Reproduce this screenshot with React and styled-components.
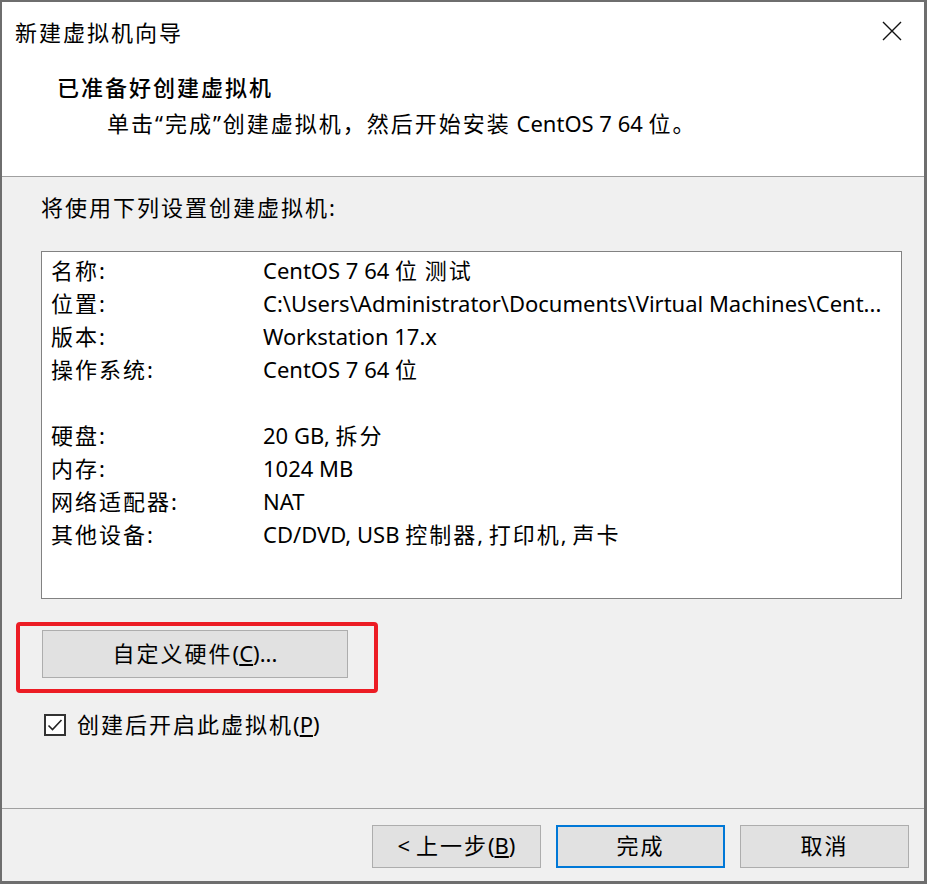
import React from 'react';
import styled, { createGlobalStyle } from 'styled-components';

const GlobalStyle = createGlobalStyle`
  html, body {
    margin: 0;
    padding: 0;
    background: #ffffff;
  }
  body {
    font-family: "Noto Sans", "Noto Sans CJK SC", sans-serif;
    color: #000;
  }
`;

// Chinese glyphs in the original UI font sit a little wider apart than Latin ones
const Han = styled.span`
  letter-spacing: 2px;
`;

const HAN_RUN = /([\u3000-\u303f\u4e00-\u9fff\uff00-\uffef“”]+)/;

function T({ children }) {
  return String(children)
    .split(HAN_RUN)
    .map((part, i) => (HAN_RUN.test(part) ? <Han key={i}>{part}</Han> : part));
}

const Window = styled.div`
  width: 927px;
  height: 884px;
  box-sizing: border-box;
  border: 2px solid #6e6e6e;
  border-right-width: 3px;
  border-bottom-width: 3px;
  display: flex;
  flex-direction: column;
  background: #f0f0f0;
  font-size: 22px;
`;

const Header = styled.div`
  height: 174px;
  background: #ffffff;
  border-bottom: 1px solid #a0a0a0;
  display: flex;
  flex-direction: column;
`;

const TitleBar = styled.div`
  height: 58px;
  display: flex;
  align-items: center;
  justify-content: space-between;
  padding: 0 22px 0 13px;
`;

const Title = styled.div`
  font-size: 22px;
`;

const CloseIcon = styled.svg`
  width: 20px;
  height: 20px;
`;

const HeaderText = styled.div`
  padding: 7px 0 0 55px;
  display: flex;
  flex-direction: column;
`;

const Heading = styled.div`
  font-weight: 500;
  font-size: 22px;
  line-height: 40px;
`;

const Subtitle = styled.div`
  padding-left: 50px;
  line-height: 32px;
`;

const Body = styled.div`
  flex: 1;
  display: flex;
  flex-direction: column;
  padding: 12px 22px 0 39px;
`;

const Lead = styled.div`
  line-height: 36px;
`;

const ListBox = styled.div`
  margin-top: 26px;
  height: 348px;
  box-sizing: border-box;
  background: #ffffff;
  border: 1px solid #828282;
  padding: 2px 9px;
`;

const Row = styled.div`
  display: grid;
  grid-template-columns: 212px 1fr;
  height: 33px;
  line-height: 33px;
  white-space: nowrap;
`;

const Value = styled.span`
  overflow: hidden;
`;

const Highlight = styled.div`
  margin: 23px 0 0 -25px;
  width: 362px;
  height: 71px;
  box-sizing: border-box;
  border: 4px solid #ec1c24;
  border-radius: 4px;
  padding: 4px 0 0 22px;
`;

const Button = styled.button`
  font-family: inherit;
  font-size: 22px;
  color: #000;
  background: #e1e1e1;
  border: ${p => (p.$primary ? '2px solid #0078d7' : '1px solid #adadad')};
  width: ${p => p.$width || 169}px;
  height: ${p => p.$height || 43}px;
  padding: 0 0 5px;
  box-sizing: border-box;
`;

const CheckRow = styled.label`
  margin-top: 14px;
  display: flex;
  align-items: center;
  gap: 11px;
  padding-left: 3px;
`;

const CheckBox = styled.span`
  width: 22px;
  height: 22px;
  box-sizing: border-box;
  border: 2px solid #333;
  background: #fff;
  display: flex;
  align-items: center;
  justify-content: center;
`;

const CheckText = styled.span`
  padding-bottom: 3px;
`;

const Footer = styled.div`
  height: 73px;
  border-top: 1px solid #a0a0a0;
  display: flex;
  justify-content: flex-end;
  align-items: flex-start;
  gap: 15px;
  padding: 16px 15px 0 0;
  box-sizing: border-box;
`;

const rows = [
  ['名称:', 'CentOS 7 64 位 测试'],
  ['位置:', 'C:\\Users\\Administrator\\Documents\\Virtual Machines\\Cent...'],
  ['版本:', 'Workstation 17.x'],
  ['操作系统:', 'CentOS 7 64 位'],
  ['', ''],
  ['硬盘:', '20 GB, 拆分'],
  ['内存:', '1024 MB'],
  ['网络适配器:', 'NAT'],
  ['其他设备:', 'CD/DVD, USB 控制器, 打印机, 声卡'],
];

export default function App() {
  return (
    <>
      <GlobalStyle />
      <Window>
        <Header>
          <TitleBar>
            <Title><T>新建虚拟机向导</T></Title>
            <CloseIcon viewBox="0 0 20 20">
              <path d="M1 1 L19 19 M19 1 L1 19" stroke="#111" strokeWidth="1.4" fill="none" />
            </CloseIcon>
          </TitleBar>
          <HeaderText>
            <Heading><T>已准备好创建虚拟机</T></Heading>
            <Subtitle><T>单击“完成”创建虚拟机，然后开始安装 CentOS 7 64 位。</T></Subtitle>
          </HeaderText>
        </Header>
        <Body>
          <Lead><T>将使用下列设置创建虚拟机:</T></Lead>
          <ListBox>
            {rows.map(([label, value], i) => (
              <Row key={i}>
                <span><T>{label}</T></span>
                <Value><T>{value}</T></Value>
              </Row>
            ))}
          </ListBox>
          <Highlight>
            <Button $width={306} $height={48}>
              <T>自定义硬件</T>(<u>C</u>)...
            </Button>
          </Highlight>
          <CheckRow>
            <CheckBox>
              <svg width="16" height="14" viewBox="0 0 16 14">
                <path d="M1.5 7.5 L5.5 11.5 L14.5 2" stroke="#222" strokeWidth="1.6" fill="none" />
              </svg>
            </CheckBox>
            <CheckText>
              <T>创建后开启此虚拟机</T>(<u>P</u>)
            </CheckText>
          </CheckRow>
        </Body>
        <Footer>
          <Button>&lt; <T>上一步</T>(<u>B</u>)</Button>
          <Button $primary><T>完成</T></Button>
          <Button><T>取消</T></Button>
        </Footer>
      </Window>
    </>
  );
}
